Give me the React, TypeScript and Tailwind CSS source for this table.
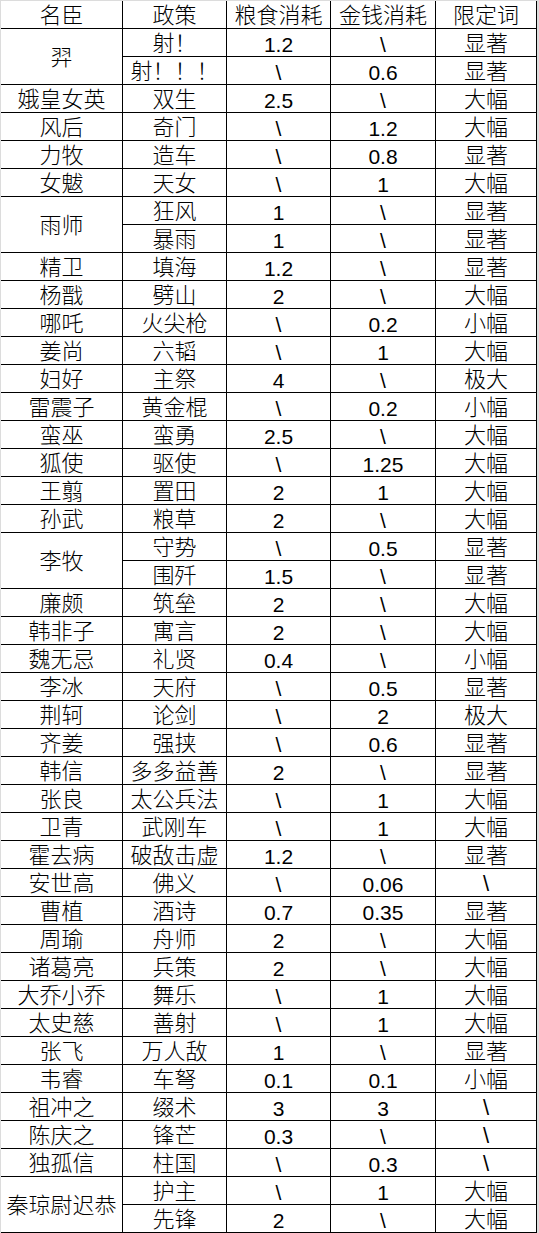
import React from 'react';

type Row = {
  name?: string;
  span?: number;
  policy: string;
  grain: string;
  money: string;
  tag: string;
};

const rows: Row[] = [
  { name: '羿', span: 2, policy: '射！', grain: '1.2', money: '\\', tag: '显著' },
  { policy: '射！！！', grain: '\\', money: '0.6', tag: '显著' },
  { name: '娥皇女英', policy: '双生', grain: '2.5', money: '\\', tag: '大幅' },
  { name: '风后', policy: '奇门', grain: '\\', money: '1.2', tag: '大幅' },
  { name: '力牧', policy: '造车', grain: '\\', money: '0.8', tag: '显著' },
  { name: '女魃', policy: '天女', grain: '\\', money: '1', tag: '大幅' },
  { name: '雨师', span: 2, policy: '狂风', grain: '1', money: '\\', tag: '显著' },
  { policy: '暴雨', grain: '1', money: '\\', tag: '显著' },
  { name: '精卫', policy: '填海', grain: '1.2', money: '\\', tag: '显著' },
  { name: '杨戬', policy: '劈山', grain: '2', money: '\\', tag: '大幅' },
  { name: '哪吒', policy: '火尖枪', grain: '\\', money: '0.2', tag: '小幅' },
  { name: '姜尚', policy: '六韬', grain: '\\', money: '1', tag: '大幅' },
  { name: '妇好', policy: '主祭', grain: '4', money: '\\', tag: '极大' },
  { name: '雷震子', policy: '黄金棍', grain: '\\', money: '0.2', tag: '小幅' },
  { name: '蛮巫', policy: '蛮勇', grain: '2.5', money: '\\', tag: '大幅' },
  { name: '狐使', policy: '驱使', grain: '\\', money: '1.25', tag: '大幅' },
  { name: '王翦', policy: '置田', grain: '2', money: '1', tag: '大幅' },
  { name: '孙武', policy: '粮草', grain: '2', money: '\\', tag: '大幅' },
  { name: '李牧', span: 2, policy: '守势', grain: '\\', money: '0.5', tag: '显著' },
  { policy: '围歼', grain: '1.5', money: '\\', tag: '显著' },
  { name: '廉颇', policy: '筑垒', grain: '2', money: '\\', tag: '大幅' },
  { name: '韩非子', policy: '寓言', grain: '2', money: '\\', tag: '大幅' },
  { name: '魏无忌', policy: '礼贤', grain: '0.4', money: '\\', tag: '小幅' },
  { name: '李冰', policy: '天府', grain: '\\', money: '0.5', tag: '显著' },
  { name: '荆轲', policy: '论剑', grain: '\\', money: '2', tag: '极大' },
  { name: '齐姜', policy: '强挟', grain: '\\', money: '0.6', tag: '显著' },
  { name: '韩信', policy: '多多益善', grain: '2', money: '\\', tag: '显著' },
  { name: '张良', policy: '太公兵法', grain: '\\', money: '1', tag: '大幅' },
  { name: '卫青', policy: '武刚车', grain: '\\', money: '1', tag: '大幅' },
  { name: '霍去病', policy: '破敌击虚', grain: '1.2', money: '\\', tag: '显著' },
  { name: '安世高', policy: '佛义', grain: '\\', money: '0.06', tag: '\\' },
  { name: '曹植', policy: '酒诗', grain: '0.7', money: '0.35', tag: '显著' },
  { name: '周瑜', policy: '舟师', grain: '2', money: '\\', tag: '大幅' },
  { name: '诸葛亮', policy: '兵策', grain: '2', money: '\\', tag: '大幅' },
  { name: '大乔小乔', policy: '舞乐', grain: '\\', money: '1', tag: '大幅' },
  { name: '太史慈', policy: '善射', grain: '\\', money: '1', tag: '大幅' },
  { name: '张飞', policy: '万人敌', grain: '1', money: '\\', tag: '显著' },
  { name: '韦睿', policy: '车弩', grain: '0.1', money: '0.1', tag: '小幅' },
  { name: '祖冲之', policy: '缀术', grain: '3', money: '3', tag: '\\' },
  { name: '陈庆之', policy: '锋芒', grain: '0.3', money: '\\', tag: '\\' },
  { name: '独孤信', policy: '柱国', grain: '\\', money: '0.3', tag: '\\' },
  { name: '秦琼尉迟恭', span: 2, policy: '护主', grain: '\\', money: '1', tag: '大幅' },
  { policy: '先锋', grain: '2', money: '\\', tag: '大幅' },
];

// spreadsheet cell: white, centred text
const cell = 'bg-white flex items-center justify-center leading-none whitespace-nowrap pt-[3px]';
const cjk = 'text-[22px] font-light';
const num = 'text-[21px]';

const App: React.FC = () => {
  return (
    <div
      className="w-[539px] h-[1233px] bg-[#dcdcdc] pt-px pl-px text-black"
      style={{ fontFamily: '"Liberation Sans", "Noto Sans CJK SC", sans-serif' }}
    >
      <div className="w-[536px] grid grid-cols-[121px_103px_103px_104px_100px] auto-rows-[27px] gap-px bg-black border-r border-b border-black">
        {/* header */}
        {['名臣', '政策', '粮食消耗', '金钱消耗', '限定词'].map((h) => (
          <div key={h} className={`${cell} ${cjk}`}>{h}</div>
        ))}

        {rows.map((r, i) => (
          <React.Fragment key={i}>
            {r.name && (
              <div className={`${cell} ${cjk} ${r.span === 2 ? 'row-span-2' : ''}`}>{r.name}</div>
            )}
            <div className={`${cell} ${cjk}`}>{r.policy}</div>
            <div className={`${cell} ${num}`}>{r.grain}</div>
            <div className={`${cell} ${num}`}>{r.money}</div>
            <div className={`${cell} ${cjk}`}>{r.tag}</div>
          </React.Fragment>
        ))}
      </div>
    </div>
  );
};

export default App;
